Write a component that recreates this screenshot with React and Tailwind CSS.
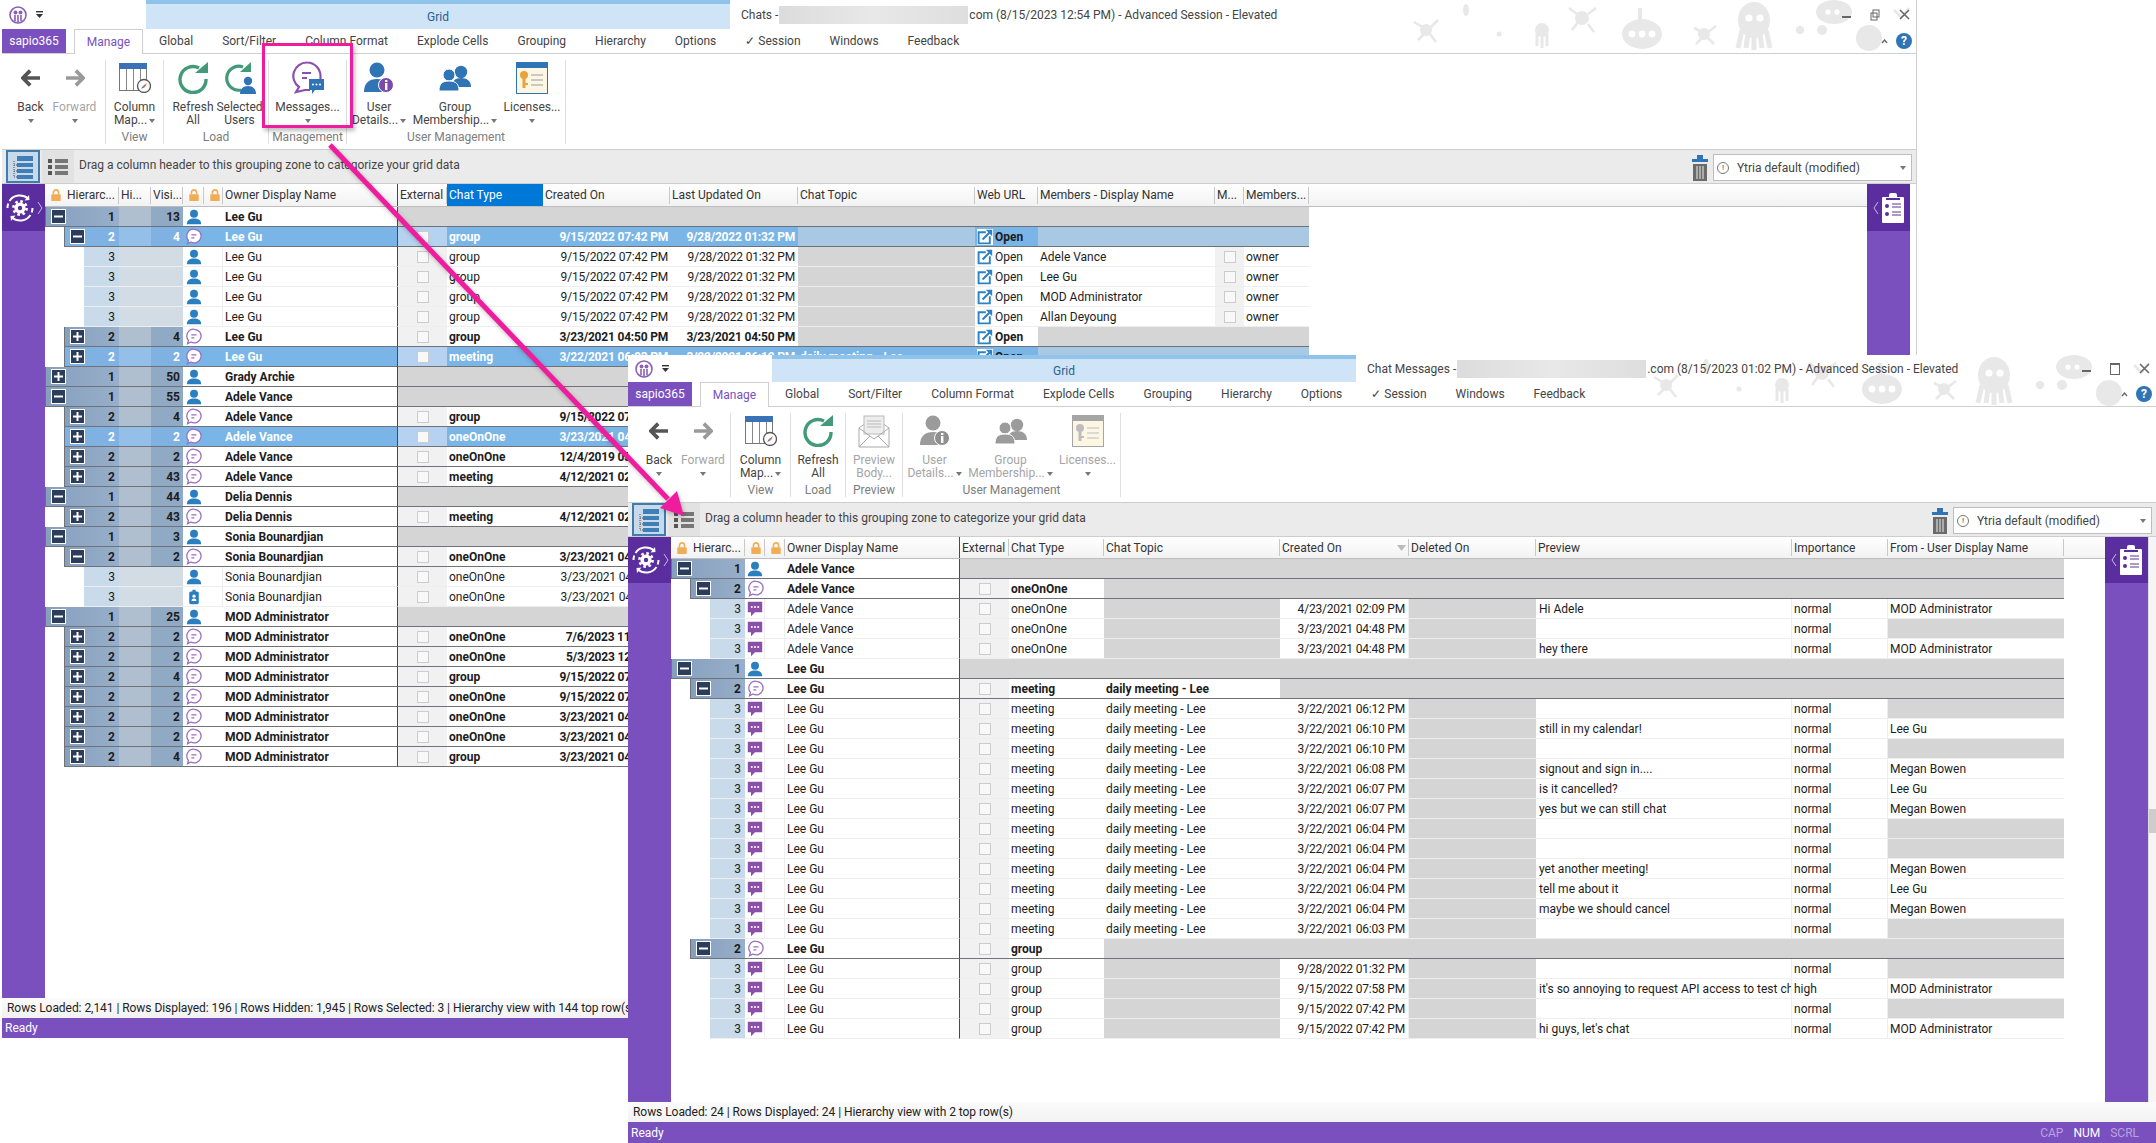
import React from 'react';

// ---- small drawings ----
const User = ({ c = '#2a7fc0' }) => (
  <svg width="16" height="16" viewBox="0 0 20 20"><circle cx="10" cy="6" r="5" fill={c} /><path d="M1 19c0-5 4-7 9-7s9 2 9 7z" fill={c} /></svg>
);
const Badge = () => (
  <svg width="16" height="16" viewBox="0 0 20 20"><rect x="4" y="3" width="12" height="16" rx="2" fill="#2a7fc0" /><rect x="8" y="1" width="4" height="4" fill="#2a7fc0" /><circle cx="10" cy="9" r="2" fill="#fff" /><path d="M7 15c0-2 1-3 3-3s3 1 3 3z" fill="#fff" /></svg>
);
const ChatRing = ({ c = '#9a6cc0', bg = 'none' }) => (
  <svg width="17" height="17" viewBox="0 0 20 20"><path d="M11 1.5a8 8 0 1 1-4 15l-4 2 1-4a8 8 0 0 1 7-13z" fill={bg} stroke={c} strokeWidth="1.5" /><path d="M7.5 8h6M7.5 11.5h3.5" stroke={c} strokeWidth="1.5" fill="none" /></svg>
);
const ChatFill = () => (
  <svg width="16" height="16" viewBox="0 0 20 20"><path d="M1 1h18v13H10l-5 5v-5H1z" fill="#8a4fa8" /><circle cx="6" cy="7.5" r="1.3" fill="#fff" /><circle cx="10" cy="7.5" r="1.3" fill="#fff" /><circle cx="14" cy="7.5" r="1.3" fill="#fff" /></svg>
);
const OpenLink = ({ bg = 'none' }) => (
  <svg width="16" height="16" viewBox="0 0 20 20"><rect x="0" y="0" width="20" height="20" fill={bg} /><path d="M11 4H2v14h14V9" stroke="#2b82c4" strokeWidth="2.4" fill="none" /><path d="M7 13L16 4" stroke="#2b82c4" strokeWidth="2.6" /><path d="M11 1h8v8z" fill="#2b82c4" /></svg>
);
const Lock = () => (
  <svg width="12" height="14" viewBox="0 0 14 16"><path d="M4 7V5a3 3 0 0 1 6 0v2" stroke="#f0ad55" strokeWidth="1.8" fill="none" /><rect x="1.5" y="7" width="11" height="8" rx="1" fill="#f0ad55" /></svg>
);
const Caret = ({ c = '#777' }) => (
  <svg width="6" height="4" viewBox="0 0 6 4"><path d="M0 0h6L3 4z" fill={c} /></svg>
);
const Gear = () => (
  <svg width="30" height="30" viewBox="0 0 30 30" fill="none">
    <path d="M4.5 8A12.5 12.5 0 0 1 23 5.5M25.5 22A12.5 12.5 0 0 1 7 24.5M2.5 15a12.5 12.5 0 0 1 .8-4.5M27.5 15a12.5 12.5 0 0 1-.8 4.5" stroke="#fff" strokeWidth="2" />
    <path d="M19.5 7.5l5-.5-.5-5zM10.5 22.5l-5 .5.5 5z" fill="#fff" />
    <circle cx="15" cy="15" r="6.6" stroke="#fff" strokeWidth="2.6" strokeDasharray="2.6 2.6" />
    <circle cx="15" cy="15" r="5.6" fill="#fff" /><circle cx="15" cy="15" r="2.2" fill="#5a2e9e" />
  </svg>
);
const Clipboard = () => (
  <svg width="24" height="30" viewBox="0 0 24 30">
    <rect x="1" y="4" width="22" height="26" rx="1" fill="#fff" /><rect x="8" y="0" width="8" height="6" rx="2" fill="#fff" /><rect x="5" y="5" width="14" height="2" fill="#5a2e9e" />
    <circle cx="6" cy="13" r="2" fill="#5a2e9e" /><circle cx="6" cy="21" r="2" fill="#5a2e9e" />
    <path d="M11 11h9M11 14h9M11 19h9M11 22h9" stroke="#8e7bb8" strokeWidth="1.4" />
  </svg>
);
const Trash = () => (
  <svg width="16" height="26" viewBox="0 0 16 26"><rect x="0" y="4" width="16" height="3" fill="#2f74b5" /><rect x="5" y="0" width="6" height="4" fill="#2f74b5" /><rect x="1" y="9" width="14" height="17" fill="#6b6b6b" /><path d="M5 11v13M8 11v13M11 11v13" stroke="#eee" strokeWidth="1" /></svg>
);
const TreeView = () => (
  <svg width="20" height="24" viewBox="0 0 20 24"><rect x="4" y="1" width="16" height="5" fill="#3f7fb8" /><rect x="4" y="8" width="16" height="4" fill="#3f7fb8" /><rect x="4" y="14" width="16" height="4" fill="#3f7fb8" /><rect x="4" y="20" width="16" height="4" fill="#3f7fb8" /><path d="M1 6v16M1 10h3M1 16h3M1 22h3" stroke="#555" strokeWidth="1" strokeDasharray="1 1" /></svg>
);
const ListView = () => (
  <svg width="20" height="18" viewBox="0 0 20 18"><path d="M0 1h4v4H0zM0 7h4v4H0zM0 13h4v4H0z" fill="#555" /><path d="M7 1h13v4H7zM7 7h13v4H7zM7 13h13v4H7z" fill="#777" /></svg>
);

const BackIcon = () => (
  <svg width="20" height="18" viewBox="0 0 24 22"><path d="M11 2L2 11l9 9M3 11h20" stroke="#555" strokeWidth="4.5" fill="none" /></svg>
);
const ForwardIcon = () => (
  <svg width="20" height="18" viewBox="0 0 24 22"><path d="M13 2l9 9-9 9M21 11H1" stroke="#9a9a9a" strokeWidth="4.5" fill="none" /></svg>
);
const ColumnMapIcon = () => (
  <svg width="32" height="30" viewBox="0 0 32 30">
    <rect x="0.5" y="0.5" width="27" height="27" fill="#fff" stroke="#777" /><rect x="0" y="0" width="28" height="6" fill="#3b72b5" />
    <path d="M7.5 6v21M14.5 6v21M21.5 6v21" stroke="#888" />
    <circle cx="25" cy="23" r="6.5" fill="#fff" stroke="#555" strokeWidth="1.3" /><path d="M28 20l-2 4-2-1z" fill="#e0542f" /><path d="M22 26l2-3 2 1z" fill="#3b72b5" />
  </svg>
);
const RefreshIcon = ({ size = 32 }) => (
  <svg width={size} height={size} viewBox="0 0 32 32" fill="none"><path d="M22 6A13 13 0 1 0 29 17" stroke="#429a78" strokeWidth="3.4" /><path d="M18 11h13V0z" fill="#429a78" /></svg>
);
const SelectedUsersIcon = () => (
  <svg width="32" height="32" viewBox="0 0 32 32" fill="none">
    <path d="M19 5A12 12 0 1 0 17 28" stroke="#429a78" strokeWidth="3.2" /><path d="M16 10h11V0z" fill="#429a78" />
    <circle cx="24" cy="19" r="4.2" fill="#2f74b5" /><path d="M16 32c0-5 3-8 8-8s8 3 8 8z" fill="#2f74b5" />
  </svg>
);
const MessagesIcon = () => (
  <svg width="32" height="34" viewBox="0 0 32 34" fill="none">
    <path d="M15 1.5a13.5 13.5 0 0 1 13.5 13.5v3M15 1.5A13.5 13.5 0 0 0 7 26l-3 5 9-2h5" stroke="#8a4fb0" strokeWidth="2.2" />
    <path d="M10 12h9M10 17h5" stroke="#8a4fb0" strokeWidth="2.2" />
    <path d="M17 18h15v11h-9l-3 4v-4h-3z" fill="#2f74b5" /><circle cx="21" cy="23.5" r="1" fill="#fff" /><circle cx="24.5" cy="23.5" r="1" fill="#fff" /><circle cx="28" cy="23.5" r="1" fill="#fff" />
  </svg>
);
const UserInfoIcon = ({ c = '#2f74b5', i = '#7e4aa8' }) => (
  <svg width="30" height="32" viewBox="0 0 30 32"><circle cx="13" cy="8" r="7.5" fill={c} /><path d="M0 30c0-9 5-13 13-13s13 4 13 13z" fill={c} /><circle cx="22" cy="23" r="7.5" fill={i} stroke="#fff" strokeWidth="1" /><rect x="21" y="21" width="2.4" height="7" fill="#fff" /><rect x="21" y="18" width="2.4" height="2" fill="#fff" /></svg>
);
const GroupIcon = ({ c = '#2f74b5' }) => (
  <svg width="32" height="26" viewBox="0 0 32 26"><circle cx="22" cy="7" r="6.2" fill={c} /><path d="M13 22c0-6 3-9 9-9s10 3 10 9z" fill={c} /><circle cx="10" cy="10" r="6" fill={c} stroke="#fff" /><path d="M0 26c0-7 3-10 10-10s10 3 10 10z" fill={c} stroke="#fff" /></svg>
);
const LicenseIcon = ({ head = '#2f74b5', key2 = '#e8a33d', line = '#bbb' }) => (
  <svg width="32" height="32" viewBox="0 0 32 32"><rect x="0.5" y="0.5" width="31" height="31" fill="#fdf6e3" stroke={head} /><rect x="0" y="0" width="32" height="6" fill={head} /><circle cx="8" cy="13" r="4" fill={key2} /><rect x="6.5" y="15" width="3" height="11" fill={key2} /><rect x="9" y="21" width="3" height="2" fill={key2} /><path d="M15 13h12M15 18h12M15 23h12" stroke={line} strokeWidth="1.6" /></svg>
);
const PreviewIcon = () => (
  <svg width="32" height="34" viewBox="0 0 32 34" fill="none"><path d="M1 14L16 3l15 11v19H1z" fill="#fff" stroke="#aaa" /><rect x="6" y="2" width="20" height="18" fill="#ededed" stroke="#bbb" /><path d="M9 7h14M9 10h14M9 13h14" stroke="#bbb" /><path d="M1 14l15 11 15-11M1 33l11-11M31 33L20 22" stroke="#aaa" /></svg>
);

// grey sea creatures behind the title bar
const Doodles = ({ className }) => (
  <svg className={className} width="512" height="52" viewBox="0 0 512 52" fill="#e8e8e8">
    <circle cx="22" cy="30" r="6" /><path d="M10 22l10 6M34 20l-8 8M14 40l6-6M32 42l-6-8" stroke="#e8e8e8" strokeWidth="2.6" />
    <ellipse cx="62" cy="10" rx="3" ry="6" /><circle cx="95" cy="34" r="2.5" />
    <circle cx="138" cy="30" r="7" /><path d="M133 34v12M138 34v14M143 34v12" stroke="#e8e8e8" strokeWidth="3" />
    <circle cx="178" cy="18" r="7" /><path d="M165 8l8 6M192 8l-8 6M168 30l6-8M190 32l-6-8" stroke="#e8e8e8" strokeWidth="2.6" />
    <ellipse cx="238" cy="34" rx="20" ry="15" /><rect x="234" y="8" width="4" height="14" /><circle cx="228" cy="34" r="3.4" fill="#fff" /><circle cx="238" cy="34" r="3.4" fill="#fff" /><circle cx="248" cy="34" r="3.4" fill="#fff" />
    <circle cx="300" cy="34" r="6" /><path d="M290 28l8 4M312 26l-8 6M292 44l6-6M310 44l-6-6" stroke="#e8e8e8" strokeWidth="2.6" />
    <ellipse cx="350" cy="20" rx="16" ry="18" /><path d="M338 30l-4 18M344 34l-2 14M350 36v14M356 34l2 14M362 30l4 18" stroke="#e8e8e8" strokeWidth="5" /><circle cx="345" cy="18" r="3.6" fill="#fff" /><circle cx="356" cy="18" r="3.6" fill="#fff" />
    <circle cx="396" cy="30" r="4" /><ellipse cx="430" cy="12" rx="18" ry="12" /><circle cx="424" cy="12" r="2.6" fill="#fff" /><circle cx="433" cy="12" r="2.6" fill="#fff" />
    <circle cx="465" cy="38" r="13" /><circle cx="418" cy="30" r="5" /><path d="M490 10l8 8M505 8l-8 10" stroke="#e8e8e8" strokeWidth="2.6" />
  </svg>
);

const PinkArrow = () => (
  <svg className="absolute left-0 top-0 pointer-events-none drop-shadow-[1px_2px_2px_rgba(0,0,0,0.25)]" width="2156" height="1143" viewBox="0 0 2156 1143">
    <line x1="330" y1="145" x2="668" y2="499" stroke="#f01c9e" strokeWidth="5" />
    <polygon points="684,516 677,491 660,508" fill="#f01c9e" />
  </svg>
);

// ---- window chrome ----
const TABS = ['Global', 'Sort/Filter', 'Column Format', 'Explode Cells', 'Grouping', 'Hierarchy', 'Options'];

function TitleBar({ h, leftW, bandW, label, after, doodleClass, controls }) {
  return (
    <div className={`${h} relative flex items-stretch bg-white shrink-0`}>
      <Doodles className={doodleClass} />
      <div className={`${leftW} flex items-center gap-[9px] pl-[7px] shrink-0`}>
        <svg width="18" height="18" viewBox="0 0 18 18" fill="none"><circle cx="9" cy="9" r="8" stroke="#8a5fb5" strokeWidth="1.6" /><circle cx="6.5" cy="6.5" r="2" fill="#8a5fb5" /><circle cx="11.5" cy="6.5" r="2" fill="#8a5fb5" /><path d="M6 9v6M12 9v6M9 9v7" stroke="#8a5fb5" strokeWidth="1.6" /></svg>
        <svg width="7" height="7" viewBox="0 0 7 7"><rect width="7" height="1.4" fill="#333" /><path d="M0 3h7L3.5 7z" fill="#333" /></svg>
      </div>
      <div className={`${bandW} shrink-0 bg-[#cfe5f7] border-t-[4px] border-[#8fc3ea] flex items-center justify-center text-[12px] text-[#2a5f8f]`}>Grid</div>
      <div className="flex items-center pl-[11px] text-[12px] text-[#444] relative">
        <span>{label}</span>
        <span className="w-[189px] h-[18px] mx-[1px] bg-gradient-to-r from-[#dcdcdc] via-[#e8e8e8] to-[#dedede]" />
        <span>{after}</span>
      </div>
      <div className="absolute right-[6px] top-0 h-full flex items-center gap-[19px]">
        <span className="w-[9px] h-[2px] bg-[#666] mt-[4px]" />
        {controls}
        <svg width="11" height="11" viewBox="0 0 11 11"><path d="M1 1l9 9M10 1l-9 9" stroke="#666" strokeWidth="1.5" /></svg>
      </div>
    </div>
  );
}

function TabRow() {
  return (
    <div className="relative h-[25px] shrink-0 flex items-stretch border-b border-[#cfcfcf] text-[12px] text-[#444]">
      <div className="w-[64px] bg-[#7a50bf] text-white flex items-center justify-center">sapio365</div>
      <div className="ml-[8px] mb-[-1px] w-[69px] bg-white border border-b-0 border-[#cfcfcf] flex items-center justify-center text-[#7a50bf]">Manage</div>
      <div className="flex items-center pl-[16px] gap-[29px]">
        {TABS.map(t => <span key={t}>{t}</span>)}
        <span>✓ Session</span>
        <span>Windows</span>
        <span>Feedback</span>
      </div>
      <div className="absolute right-[4px] top-0 h-full flex items-center gap-[8px]">
        <svg width="7" height="5" viewBox="0 0 7 5"><path d="M1 4l2.5-3L6 4" stroke="#666" strokeWidth="1.3" fill="none" /></svg>
        <span className="w-[16px] h-[16px] rounded-full bg-[#2f74b5] text-white text-[12px] font-bold flex items-center justify-center">?</span>
      </div>
    </div>
  );
}

function RibbonBtn({ icon, lines, w, dim, caret }) {
  const tone = dim ? 'text-[#a5a5a5]' : 'text-[#444]';
  return (
    <div className={`${w} shrink-0 flex flex-col items-center pt-[1px] text-[12px] leading-[13px] ${tone}`}>
      <div className="h-[34px] flex items-center justify-center">{icon}</div>
      <div className="mt-[6px] whitespace-nowrap text-center">{lines[0]}</div>
      {lines[1] && (
        <div className="whitespace-nowrap flex items-center gap-[2px] h-[13px]">
          {lines[1]}{caret === 'inline' && <Caret />}
        </div>
      )}
      {caret === 'below' && <div className="h-[13px] flex items-center"><Caret /></div>}
    </div>
  );
}

function RibbonGroup({ w, label, children }) {
  return (
    <div className={`${w} shrink-0 h-[84px] border-r border-[#dedede] flex flex-col`}>
      <div className="flex-1 flex justify-center">{children}</div>
      <div className="h-[14px] leading-[14px] text-center text-[12px] text-[#7d7d7d] whitespace-nowrap">{label}</div>
    </div>
  );
}

function GroupBar({ dropClass }) {
  return (
    <div className="h-[35px] shrink-0 bg-[#ebebeb] border-t border-b border-[#cdcdcd] flex items-center">
      <div className="ml-[4px] w-[34px] h-[33px] bg-[#c8d9ea] border-2 border-[#3f7cb0] flex items-center justify-center"><TreeView /></div>
      <div className="ml-[2px] w-[32px] h-[33px] bg-[#e2e2e2] flex items-center justify-center"><ListView /></div>
      <span className="ml-[5px] mb-[4px] text-[12px] text-[#444]">Drag a column header to this grouping zone to categorize your grid data</span>
      <div className="ml-auto mr-[4px] mt-[2px] flex items-center gap-[5px]">
        <Trash />
        <div className={`${dropClass} h-[27px] bg-white border border-[#bdbdbd] flex items-center px-[3px] text-[12px] text-[#444]`}>
          <span className="w-[12px] h-[12px] rounded-full border border-[#777] text-[8px] flex items-center justify-center mr-[8px]">!</span>
          Ytria default (modified)
          <span className="ml-auto mr-[2px]"><Caret /></span>
        </div>
      </div>
    </div>
  );
}

function SidePanel({ right, h }) {
  return (
    <div className="w-[43px] shrink-0 bg-[#7a50bf]">
      <div className={`${h} bg-[#5a2e9e] flex items-center justify-center gap-[2px] text-white`}>
        {right ? (
          <>
            <svg width="6" height="14" viewBox="0 0 6 14"><path d="M5 1L1 7l4 6" stroke="#c9b8e6" fill="none" /></svg>
            <Clipboard />
          </>
        ) : (
          <>
            <Gear />
            <svg width="6" height="14" viewBox="0 0 6 14"><path d="M1 1l4 6-4 6" stroke="#c9b8e6" fill="none" /></svg>
          </>
        )}
      </div>
    </div>
  );
}

function StatusBars({ text, h, flags }) {
  return (
    <>
      <div className="h-[20px] shrink-0 bg-gradient-to-b from-[#fbfbfb] to-[#f2f2f2] flex items-center pl-[5px] text-[12px] tracking-[-0.05px] text-[#222] whitespace-nowrap">{text}</div>
      <div className={`${h} shrink-0 bg-[#7a50bf] flex items-center px-[3px] text-[12px] text-white`}>
        Ready
        {flags && (
          <div className="ml-auto mr-[14px] flex gap-[10px]">
            <span className="text-[#b9a3e0]">CAP</span><span>NUM</span><span className="text-[#b9a3e0]">SCRL</span>
          </div>
        )}
      </div>
    </>
  );
}

// ---- grid pieces ----
function ExpandBox({ open }) {
  return (
    <span className="ml-[5px] w-[15px] h-[15px] shrink-0 bg-[#2b3d5a] border border-white flex items-center justify-center">
      <svg width="9" height="9" viewBox="0 0 9 9"><path d={open ? 'M0 4.5h9' : 'M0 4.5h9M4.5 0v9'} stroke="#fff" strokeWidth="2" /></svg>
    </span>
  );
}

const Check = () => <span className="w-[12px] h-[12px] border border-[#cccccc] bg-[#f8f8f8]" />;

function HeaderCell({ w, label, active, lock, frozen, sort }) {
  return (
    <div className={`${w} shrink-0 h-full flex items-center whitespace-nowrap overflow-hidden pl-[2px] ${frozen ? 'border-r border-[#3f4a5c]' : ''} ${active ? 'bg-[#0078d7] text-white' : ''}`}>
      {lock && <span className={`${label ? 'ml-[3px] mr-[5px]' : 'ml-[3px]'} flex`}><Lock /></span>}
      <span className="flex-1 overflow-hidden">{label}</span>
      {sort && <svg className="mr-[2px]" width="9" height="6" viewBox="0 0 9 6"><path d="M0 0h9L4.5 6z" fill="#bbb" /></svg>}
      {!active && !frozen && <span className="w-px h-[17px] bg-[#c8c8c8] shrink-0" />}
    </div>
  );
}

function GridHeader({ h, children }) {
  return <div className={`${h} shrink-0 flex items-center bg-gradient-to-b from-white to-[#f2f2f2] border-b border-[#bdbdbd] text-[12px] text-[#333]`}>{children}</div>;
}

// tree part of a row; the indent stays white, the rest carries the row border
function TreeCell({ r, w, sel, border }) {
  const bg = r.lvl === 3 ? 'bg-[#c9dbea]' : sel ? 'bg-[#7fb1e2]' : 'bg-gradient-to-r from-[#869fbd] to-[#97afca]';
  return (
    <div className={`${w} shrink-0 flex`}>
      {r.lvl === 2 && <div className="w-[19px] shrink-0" />}
      {r.lvl === 3 && <div className="w-[39px] shrink-0" />}
      <div className={`flex-1 flex items-center ${border} ${r.lvl < 3 ? 'border-l border-l-[#6f7378]' : ''} ${bg}`}>
        {r.lvl < 3 && <ExpandBox open={r.open} />}
        <span className="ml-auto pr-[4px]">{r.lvl}</span>
      </div>
    </div>
  );
}

const rowBorder = r => (r.lvl < 3 ? 'border-[#6f7378]' : 'border-[#eeeeee]');

// ---- first window: Chats ----
const c1 = {
  hier: 'w-[74px]', hi: 'w-[32px]', visi: 'w-[32px]', l1: 'w-[21px]', l2: 'w-[19px]', owner: 'w-[175px]',
  ext: 'w-[49px]', type: 'w-[96px]', created: 'w-[127px]', updated: 'w-[128px]', topic: 'w-[177px]',
  web: 'w-[63px]', member: 'w-[177px]', m: 'w-[29px]', role: 'w-[65px]',
};

const M = (name, visi, type, created, updated, extra = {}) => ({ lvl: 2, name, visi, type, created, updated, ...extra });
const U = (name, visi, open) => ({ lvl: 1, name, visi, open });
const D = (member) => ({ lvl: 3, name: 'Lee Gu', type: 'group', created: '9/15/2022 07:42 PM', updated: '9/28/2022 01:32 PM', member });
const S = (badge) => ({ lvl: 3, name: 'Sonia Bounardjian', type: 'oneOnOne', created: '3/23/2021 04:48 PM', updated: '3/23/2021 04:48 PM', member: 'Sonia Bounardjian', badge });

const chatRows = [
  U('Lee Gu', 13, true),
  M('Lee Gu', 4, 'group', '9/15/2022 07:42 PM', '9/28/2022 01:32 PM', { open: true, sel: true }),
  D('Adele Vance'), D('Lee Gu'), D('MOD Administrator'), D('Allan Deyoung'),
  M('Lee Gu', 4, 'group', '3/23/2021 04:50 PM', '3/23/2021 04:50 PM'),
  M('Lee Gu', 2, 'meeting', '3/22/2021 06:03 PM', '3/22/2021 06:12 PM', { sel: true, topic: 'daily meeting - Lee' }),
  U('Grady Archie', 50),
  U('Adele Vance', 55, true),
  M('Adele Vance', 4, 'group', '9/15/2022 07:42 PM', '9/15/2022 07:42 PM'),
  M('Adele Vance', 2, 'oneOnOne', '3/23/2021 04:48 PM', '3/23/2021 04:48 PM', { sel: true }),
  M('Adele Vance', 2, 'oneOnOne', '12/4/2019 03:11 PM', '12/4/2019 03:11 PM'),
  M('Adele Vance', 43, 'meeting', '4/12/2021 02:30 PM', '4/12/2021 02:30 PM'),
  U('Delia Dennis', 44, true),
  M('Delia Dennis', 43, 'meeting', '4/12/2021 02:30 PM', '4/12/2021 02:30 PM'),
  U('Sonia Bounardjian', 3, true),
  M('Sonia Bounardjian', 2, 'oneOnOne', '3/23/2021 04:48 PM', '3/23/2021 04:48 PM', { open: true }),
  S(false), S(true),
  U('MOD Administrator', 25, true),
  M('MOD Administrator', 2, 'oneOnOne', '7/6/2023 11:20 AM', '7/6/2023 11:20 AM'),
  M('MOD Administrator', 2, 'oneOnOne', '5/3/2023 12:05 PM', '5/3/2023 12:05 PM'),
  M('MOD Administrator', 4, 'group', '9/15/2022 07:42 PM', '9/15/2022 07:42 PM'),
  M('MOD Administrator', 2, 'oneOnOne', '9/15/2022 07:42 PM', '9/15/2022 07:42 PM'),
  M('MOD Administrator', 2, 'oneOnOne', '3/23/2021 04:48 PM', '3/23/2021 04:48 PM'),
  M('MOD Administrator', 2, 'oneOnOne', '3/23/2021 04:48 PM', '3/23/2021 04:48 PM'),
  M('MOD Administrator', 4, 'group', '3/23/2021 04:48 PM', '3/23/2021 04:48 PM'),
];

function ChatRow({ r }) {
  const sel = r.sel;
  const bold = r.lvl < 3 ? 'font-bold' : '';
  const txt = sel ? 'text-white' : 'text-[#1c1c1c]';
  const fillGray = sel ? 'bg-[#a9c8e3]' : 'bg-[#d5d5d5]';
  const cellBg = sel ? 'bg-[#7ab5e8]' : 'bg-white';
  const hiBg = r.lvl === 3 ? 'bg-[#d2dce5]' : sel ? 'bg-[#94bfe8]' : 'bg-[#afbfd0]';
  const visiBg = r.lvl === 3 ? 'bg-[#d2dce5]' : sel ? 'bg-[#7fb1e2]' : 'bg-[#90a9c5]';
  const b = `border-b ${rowBorder(r)}`;
  return (
    <div className={`h-[20px] flex text-[12px] leading-[20px] whitespace-nowrap ${bold} ${txt}`}>
      <TreeCell r={r} w={c1.hier} sel={sel} border={b} />
      <div className={`${c1.hi} shrink-0 ${hiBg} ${b}`} />
      <div className={`${c1.visi} shrink-0 ${visiBg} ${b} text-right pr-[3px]`}>{r.visi}</div>
      <div className={`${c1.l1} shrink-0 ${cellBg} ${b} flex items-center justify-center`}>
        {r.lvl === 1 ? <User /> : r.badge ? <Badge /> : r.lvl === 3 ? <User /> : <ChatRing bg={sel ? '#fff' : 'none'} />}
      </div>
      <div className={`${c1.l2} shrink-0 ${cellBg} ${b} ${r.lvl === 3 ? 'border-r border-r-[#eeeeee]' : ''}`} />
      <div className={`${c1.owner} shrink-0 ${cellBg} ${b} border-r border-r-[#3f4a5c] pl-[2px]`}>{r.name}</div>
      {r.lvl === 1 ? (
        <div className={`flex-1 bg-[#d5d5d5] ${b}`} />
      ) : (
        <>
          <div className={`${c1.ext} shrink-0 ${sel ? 'bg-[#b5d3f0]' : 'bg-[#f1f1f1]'} ${b} flex items-center justify-center`}><Check /></div>
          <div className={`${c1.type} shrink-0 ${cellBg} ${b} pl-[2px]`}>{r.type}</div>
          <div className={`${c1.created} shrink-0 ${cellBg} ${b} text-right pr-[2px] tracking-[-0.2px]`}>{r.created}</div>
          <div className={`${c1.updated} shrink-0 ${cellBg} ${b} text-right pr-[3px] tracking-[-0.2px]`}>{r.updated}</div>
          <div className={`${c1.topic} shrink-0 ${r.topic ? cellBg : fillGray} ${b} pl-[2px] overflow-hidden`}>{r.topic}</div>
          <div className={`${c1.web} shrink-0 ${sel ? 'bg-[#7ab5e8]' : 'bg-white'} ${b} flex items-center gap-[2px] pl-[2px] text-[#1c1c1c]`}><OpenLink bg={sel ? '#fff' : 'none'} />Open</div>
          {r.member ? (
            <>
              <div className={`${c1.member} shrink-0 bg-white ${b} pl-[2px]`}>{r.member}</div>
              <div className={`${c1.m} shrink-0 bg-[#f1f1f1] ${b} flex items-center justify-center`}><Check /></div>
              <div className={`${c1.role} shrink-0 bg-white ${b} pl-[2px]`}>owner</div>
            </>
          ) : (
            <div className={`flex-1 ${fillGray} ${b}`} />
          )}
        </>
      )}
    </div>
  );
}

function ChatsWindow() {
  return (
    <div className="absolute left-[2px] top-0 w-[1915px] h-[1038px] flex flex-col bg-white border-r border-[#cfcfcf]">
      <TitleBar
        h="h-[29px]"
        leftW="w-[144px]"
        bandW="w-[584px]"
        label="Chats -"
        after="com (8/15/2023 12:54 PM) - Advanced Session - Elevated"
        doodleClass="absolute right-0 top-0"
        controls={<svg width="10" height="12" viewBox="0 0 10 12" fill="none"><rect x="1" y="4" width="6" height="7" stroke="#666" /><rect x="3" y="1" width="6" height="7" stroke="#666" /></svg>}
      />
      <TabRow />
      <div className="h-[95px] shrink-0 flex items-start pt-[6px] bg-white">
        <RibbonGroup w="w-[104px]" label="">
          <div className="flex pr-[2px]">
            <RibbonBtn w="w-[44px]" icon={<BackIcon />} lines={['Back']} caret="below" />
            <RibbonBtn w="w-[44px]" dim icon={<ForwardIcon />} lines={['Forward']} caret="below" />
          </div>
        </RibbonGroup>
        <RibbonGroup w="w-[58px]" label="View">
          <RibbonBtn w="w-[56px]" icon={<ColumnMapIcon />} lines={['Column', 'Map...']} caret="inline" />
        </RibbonGroup>
        <RibbonGroup w="w-[105px]" label="Load">
          <RibbonBtn w="w-[47px]" icon={<RefreshIcon />} lines={['Refresh', 'All']} />
          <RibbonBtn w="w-[46px]" icon={<SelectedUsersIcon />} lines={['Selected', 'Users']} />
        </RibbonGroup>
        <RibbonGroup w="w-[78px]" label="Management">
          <RibbonBtn w="w-[70px]" icon={<MessagesIcon />} lines={['Messages...']} caret="below" />
        </RibbonGroup>
        <RibbonGroup w="w-[219px]" label="User Management">
          <RibbonBtn w="w-[60px]" icon={<UserInfoIcon />} lines={['User', 'Details...']} caret="inline" />
          <RibbonBtn w="w-[92px]" icon={<GroupIcon />} lines={['Group', 'Membership...']} caret="inline" />
          <RibbonBtn w="w-[62px]" icon={<LicenseIcon />} lines={['Licenses...']} caret="below" />
        </RibbonGroup>
      </div>
      <GroupBar dropClass="w-[199px]" />
      <div className="flex-1 min-h-0 flex">
        <SidePanel h="h-[47px]" />
        <div className="flex-1 min-w-0 overflow-hidden">
          <GridHeader h="h-[23px]">
            <HeaderCell w={c1.hier} lock label="Hierarc..." />
            <HeaderCell w={c1.hi} label="Hi..." />
            <HeaderCell w={c1.visi} label="Visi..." />
            <HeaderCell w={c1.l1} lock />
            <HeaderCell w={c1.l2} lock />
            <HeaderCell w={c1.owner} frozen label="Owner Display Name" />
            <HeaderCell w={c1.ext} label="External" />
            <HeaderCell w={c1.type} active label="Chat Type" />
            <HeaderCell w={c1.created} label="Created On" />
            <HeaderCell w={c1.updated} label="Last Updated On" />
            <HeaderCell w={c1.topic} label="Chat Topic" />
            <HeaderCell w={c1.web} label="Web URL" />
            <HeaderCell w={c1.member} label="Members - Display Name" />
            <HeaderCell w={c1.m} label="M..." />
            <HeaderCell w={c1.role} label="Members..." />
          </GridHeader>
          <div className="w-[1264px]">
            {chatRows.map((r, i) => <ChatRow key={i} r={r} />)}
          </div>
        </div>
        <SidePanel right h="h-[47px]" />
        <div className="w-[6px] shrink-0" />
      </div>
      <StatusBars h="h-[20px]" text="Rows Loaded: 2,141 | Rows Displayed: 196 | Rows Hidden: 1,945 | Rows Selected: 3 | Hierarchy view with 144 top row(s)" />
    </div>
  );
}

// ---- second window: Chat Messages ----
const c2 = {
  hier: 'w-[74px]', l1: 'w-[20px]', l2: 'w-[20px]', owner: 'w-[175px]', ext: 'w-[49px]', type: 'w-[95px]',
  topic: 'w-[176px]', created: 'w-[129px]', deleted: 'w-[127px]', preview: 'w-[256px]', imp: 'w-[96px]', from: 'w-[176px]',
};

const Msg = (name, type, topic, created, preview, from, imp = 'normal') => ({ lvl: 3, name, type, topic, created, preview, from, imp });
const lee = (time, preview, from) => Msg('Lee Gu', 'meeting', 'daily meeting - Lee', `3/22/2021 ${time} PM`, preview, from);

const messageRows = [
  { lvl: 1, name: 'Adele Vance', open: true },
  { lvl: 2, name: 'Adele Vance', type: 'oneOnOne', open: true },
  Msg('Adele Vance', 'oneOnOne', '', '4/23/2021 02:09 PM', 'Hi Adele', 'MOD Administrator'),
  Msg('Adele Vance', 'oneOnOne', '', '3/23/2021 04:48 PM', '', ''),
  Msg('Adele Vance', 'oneOnOne', '', '3/23/2021 04:48 PM', 'hey there', 'MOD Administrator'),
  { lvl: 1, name: 'Lee Gu', open: true },
  { lvl: 2, name: 'Lee Gu', type: 'meeting', topic: 'daily meeting - Lee', open: true },
  lee('06:12', '', ''),
  lee('06:10', 'still in my calendar!', 'Lee Gu'),
  lee('06:10', '', ''),
  lee('06:08', 'signout and sign in....', 'Megan Bowen'),
  lee('06:07', 'is it cancelled?', 'Lee Gu'),
  lee('06:07', 'yes but we can still chat', 'Megan Bowen'),
  lee('06:04', '', ''),
  lee('06:04', '', ''),
  lee('06:04', 'yet another meeting!', 'Megan Bowen'),
  lee('06:04', 'tell me about it', 'Lee Gu'),
  lee('06:04', 'maybe we should cancel', 'Megan Bowen'),
  lee('06:03', '', ''),
  { lvl: 2, name: 'Lee Gu', type: 'group', open: true },
  Msg('Lee Gu', 'group', '', '9/28/2022 01:32 PM', '', ''),
  Msg('Lee Gu', 'group', '', '9/15/2022 07:58 PM', "it's so annoying to request API access to test ch", 'MOD Administrator', 'high'),
  Msg('Lee Gu', 'group', '', '9/15/2022 07:42 PM', '', ''),
  Msg('Lee Gu', 'group', '', '9/15/2022 07:42 PM', 'hi guys, let\'s chat', 'MOD Administrator'),
];

function MessageRow({ r }) {
  const b = `border-b ${rowBorder(r)}`;
  const thin = r.lvl === 3 ? 'border-r border-r-[#eeeeee]' : '';
  return (
    <div className={`h-[20px] flex text-[12px] leading-[20px] whitespace-nowrap text-[#1c1c1c] ${r.lvl < 3 ? 'font-bold' : ''}`}>
      <TreeCell r={r} w={c2.hier} border={b} />
      <div className={`${c2.l1} shrink-0 bg-white ${b} ${thin} flex items-center justify-center`}>
        {r.lvl === 1 ? <User /> : r.lvl === 2 ? <ChatRing /> : <ChatFill />}
      </div>
      <div className={`${c2.l2} shrink-0 bg-white ${b} ${thin}`} />
      <div className={`${c2.owner} shrink-0 bg-white ${b} border-r border-r-[#3f4a5c] pl-[2px]`}>{r.name}</div>
      {r.lvl === 1 ? (
        <div className={`flex-1 bg-[#d5d5d5] ${b}`} />
      ) : (
        <>
          <div className={`${c2.ext} shrink-0 bg-[#f1f1f1] ${b} flex items-center justify-center`}><Check /></div>
          <div className={`${c2.type} shrink-0 bg-white ${b} pl-[2px]`}>{r.type}</div>
          <div className={`${c2.topic} shrink-0 ${r.topic ? 'bg-white' : 'bg-[#d5d5d5]'} ${b} pl-[2px] overflow-hidden`}>{r.topic}</div>
          {r.lvl === 2 ? (
            <div className={`flex-1 bg-[#d5d5d5] ${b}`} />
          ) : (
            <>
              <div className={`${c2.created} shrink-0 bg-white ${b} ${thin} text-right pr-[3px] tracking-[-0.2px]`}>{r.created}</div>
              <div className={`${c2.deleted} shrink-0 bg-[#d5d5d5] ${b}`} />
              <div className={`${c2.preview} shrink-0 bg-white ${b} ${thin} pl-[3px] overflow-hidden`}>{r.preview}</div>
              <div className={`${c2.imp} shrink-0 bg-white ${b} ${thin} pl-[2px]`}>{r.imp}</div>
              <div className={`${c2.from} shrink-0 ${r.from ? 'bg-white' : 'bg-[#d5d5d5]'} ${b} pl-[2px]`}>{r.from}</div>
            </>
          )}
        </>
      )}
    </div>
  );
}

function MessagesWindow() {
  return (
    <div className="absolute left-[628px] top-[355px] w-[1528px] h-[788px] flex flex-col bg-white">
      <TitleBar
        h="h-[27px]"
        leftW="w-[144px]"
        bandW="w-[584px]"
        label="Chat Messages -"
        after=".com (8/15/2023 01:02 PM) - Advanced Session - Elevated"
        doodleClass="absolute right-0 top-0"
        controls={<span className="w-[10px] h-[12px] border border-[#666] border-t-2" />}
      />
      <TabRow />
      <div className="h-[95px] shrink-0 flex items-start pt-[6px] bg-white">
        <RibbonGroup w="w-[103px]" label="">
          <div className="flex pl-[4px]">
            <RibbonBtn w="w-[44px]" icon={<BackIcon />} lines={['Back']} caret="below" />
            <RibbonBtn w="w-[44px]" dim icon={<ForwardIcon />} lines={['Forward']} caret="below" />
          </div>
        </RibbonGroup>
        <RibbonGroup w="w-[60px]" label="View">
          <RibbonBtn w="w-[56px]" icon={<ColumnMapIcon />} lines={['Column', 'Map...']} caret="inline" />
        </RibbonGroup>
        <RibbonGroup w="w-[55px]" label="Load">
          <RibbonBtn w="w-[50px]" icon={<RefreshIcon />} lines={['Refresh', 'All']} />
        </RibbonGroup>
        <RibbonGroup w="w-[57px]" label="Preview">
          <RibbonBtn w="w-[50px]" dim icon={<PreviewIcon />} lines={['Preview', 'Body...']} />
        </RibbonGroup>
        <RibbonGroup w="w-[218px]" label="User Management">
          <RibbonBtn w="w-[60px]" dim icon={<UserInfoIcon c="#9b9b9b" i="#8f8f8f" />} lines={['User', 'Details...']} caret="inline" />
          <RibbonBtn w="w-[92px]" dim icon={<GroupIcon c="#9b9b9b" />} lines={['Group', 'Membership...']} caret="inline" />
          <RibbonBtn w="w-[62px]" dim icon={<LicenseIcon head="#a5a5a5" key2="#bdbdbd" line="#cfcfcf" />} lines={['Licenses...']} caret="below" />
        </RibbonGroup>
      </div>
      <GroupBar dropClass="w-[199px]" />
      <div className="flex-1 min-h-0 flex">
        <SidePanel h="h-[46px]" />
        <div className="flex-1 min-w-0 overflow-hidden">
          <GridHeader h="h-[22px]">
            <HeaderCell w={c2.hier} lock label="Hierarc..." />
            <HeaderCell w={c2.l1} lock />
            <HeaderCell w={c2.l2} lock />
            <HeaderCell w={c2.owner} frozen label="Owner Display Name" />
            <HeaderCell w={c2.ext} label="External" />
            <HeaderCell w={c2.type} label="Chat Type" />
            <HeaderCell w={c2.topic} label="Chat Topic" />
            <HeaderCell w={c2.created} sort label="Created On" />
            <HeaderCell w={c2.deleted} label="Deleted On" />
            <HeaderCell w={c2.preview} label="Preview" />
            <HeaderCell w={c2.imp} label="Importance" />
            <HeaderCell w={c2.from} label="From - User Display Name" />
          </GridHeader>
          <div className="w-[1393px]">
            {messageRows.map((r, i) => <MessageRow key={i} r={r} />)}
          </div>
        </div>
        <SidePanel right h="h-[46px]" />
        <div className="w-[8px] shrink-0 bg-[#f5f5f5] border-l border-[#dddddd] flex flex-col pt-[272px]">
          <div className="h-[24px] bg-[#cdcdcd]" />
        </div>
      </div>
      <StatusBars h="h-[21px]" flags text="Rows Loaded: 24 | Rows Displayed: 24 | Hierarchy view with 2 top row(s)" />
    </div>
  );
}

export default function App() {
  return (
    <div className="relative w-[2156px] h-[1143px] overflow-hidden bg-white [font-family:Roboto,sans-serif]">
      <ChatsWindow />
      {/* call-out around the Messages button */}
      <div className="absolute left-[262px] top-[43px] w-[91px] h-[85px] border-[3px] border-[#f01c9e] shadow-[2px_3px_4px_rgba(0,0,0,0.25)]" />
      <MessagesWindow />
      <PinkArrow />
    </div>
  );
}
